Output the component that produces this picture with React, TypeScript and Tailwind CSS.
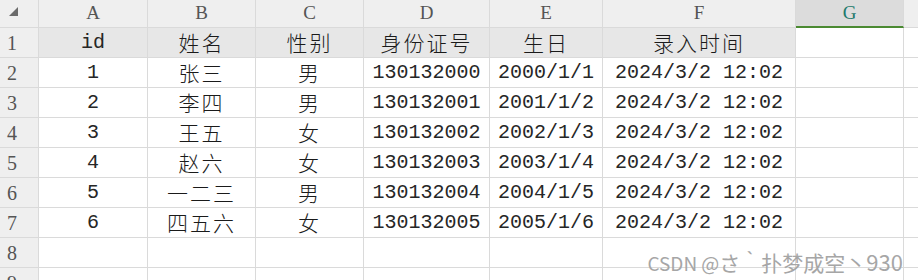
const cols = [
  { key: 'A', w: 'w-[109px]' },
  { key: 'B', w: 'w-[108px]' },
  { key: 'C', w: 'w-[108px]' },
  { key: 'D', w: 'w-[126px]' },
  { key: 'E', w: 'w-[113px]' },
  { key: 'F', w: 'w-[193px]' },
  { key: 'G', w: 'w-[108px]' },
];

const header = ['id', '姓名', '性别', '身份证号', '生日', '录入时间'];

const rows = [
  ['1', '张三', '男', '130132000', '2000/1/1', '2024/3/2 12:02'],
  ['2', '李四', '男', '130132001', '2001/1/2', '2024/3/2 12:02'],
  ['3', '王五', '女', '130132002', '2002/1/3', '2024/3/2 12:02'],
  ['4', '赵六', '女', '130132003', '2003/1/4', '2024/3/2 12:02'],
  ['5', '一二三', '男', '130132004', '2004/1/5', '2024/3/2 12:02'],
  ['6', '四五六', '女', '130132005', '2005/1/6', '2024/3/2 12:02'],
];

const cjk = /[\u4e00-\u9fff]/;

function Cell({ value, w, shaded }: { value?: string; w: string; shaded?: boolean }) {
  const isCjk = value ? cjk.test(value) : false;
  return (
    <div
      className={`${w} h-[30px] shrink-0 border-r border-b border-[#dadada] flex items-center justify-center ${
        shaded ? 'bg-[#e7e7e7]' : 'bg-white'
      }`}
    >
      {value &&
        (isCjk ? (
          <span className="font-['Noto_Sans_CJK_SC',sans-serif] text-[21px] font-light tracking-[2px] text-[#1a1a1a]">
            {value}
          </span>
        ) : (
          <span className="font-['Liberation_Mono',monospace] text-[20px] text-[#262626]">{value}</span>
        ))}
    </div>
  );
}

export default function App() {
  return (
    <div className="relative w-[918px] h-[280px] overflow-hidden bg-white">
      {/* column letters */}
      <div className="flex h-[28px] bg-[#efefef]">
        <div className="relative w-[39px] h-[28px] shrink-0 border-r border-b border-[#dadada]">
          <svg className="absolute left-[9px] top-[7px]" width="10" height="10" viewBox="0 0 10 10">
            <polygon points="9,0 9,9 0,9" fill="#6b6b6b" />
          </svg>
        </div>
        {cols.map((c) =>
          c.key === 'G' ? (
            <div
              key={c.key}
              className={`${c.w} h-[28px] shrink-0 border-r border-[#dadada] bg-[#dcdcdc] border-b-2 border-b-[#4b8a32] flex items-center justify-center`}
            >
              <span className="font-['Liberation_Serif',serif] text-[19px] text-[#1d7a6c]">{c.key}</span>
            </div>
          ) : (
            <div
              key={c.key}
              className={`${c.w} h-[28px] shrink-0 border-r border-b border-[#dadada] flex items-center justify-center`}
            >
              <span className="font-['Liberation_Serif',serif] text-[19px] text-[#555]">{c.key}</span>
            </div>
          )
        )}
        <div className="flex-1 border-b border-[#dadada]" />
      </div>

      {[header, ...rows, [], []].map((r, i) => (
        <div key={i} className="flex">
          <div className="w-[39px] h-[30px] shrink-0 border-r border-b border-[#dadada] bg-[#efefef] flex items-center pl-[7px]">
            <span className="font-['Liberation_Serif',serif] text-[20px] text-[#555]">{i + 1}</span>
          </div>
          {cols.map((c, j) => (
            <Cell key={c.key} w={c.w} value={r[j]} shaded={i === 0 && j < 6} />
          ))}
          <div className="flex-1 h-[30px] border-b border-[#dadada]" />
        </div>
      ))}

      {/* watermark */}
      <div className="absolute right-[15px] top-[245px] flex items-baseline whitespace-nowrap text-[#a6a6a6] font-['Noto_Sans_CJK_SC',sans-serif]">
        <span className="text-[19px]">CSDN @</span>
        <span className="text-[21px]">さ｀扑梦成空丶</span>
        <span className="text-[22px]">930</span>
      </div>
    </div>
  );
}
